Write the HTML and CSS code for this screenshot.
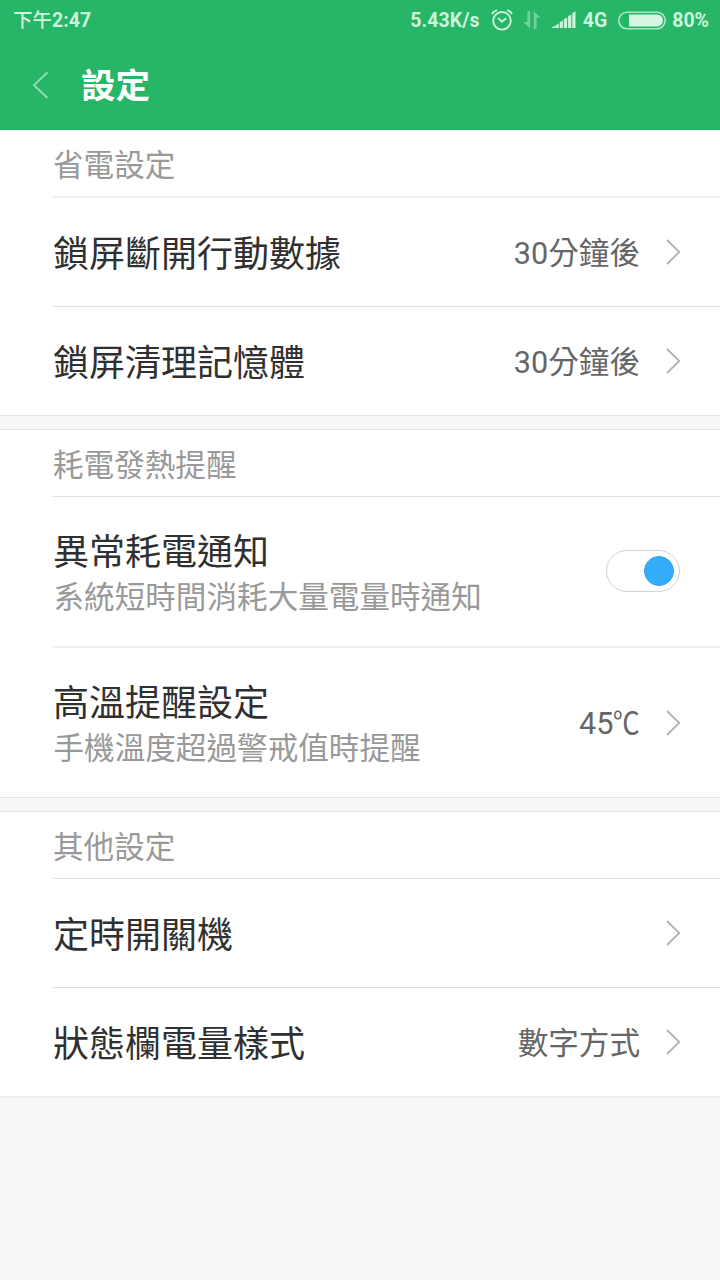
FILE: index.html
```html
<!DOCTYPE html>
<html lang="zh-Hant">
<head>
<meta charset="utf-8">
<title>設定</title>
<link rel="stylesheet" href="styles.css">
</head>
<body>
<header class="top">
  <div class="status">
    <span class="time">下午<b>2:47</b></span>
    <span class="speed">5.43K/s</span>
    <svg class="alarm" width="22" height="22" viewBox="0 0 22 22"><circle cx="11" cy="11.800" r="8.800"/><path d="M7.200 9.200l3.600 3.600 4.400-3.600M1 5Q2.400 2.200 6 1.200M21 5Q19.600 2.200 16 1.200"/></svg>
    <svg class="transfer" width="18" height="18" viewBox="0 0 18 18"><path d="M4.300 0h2.800v17.500L.2 11h4.100zM10.800 18h2.800V6.800h4.200L10.800.2z"/></svg>
    <svg class="signal" width="25" height="18" viewBox="0 0 25 18"><path d="M0 17L4 14.500V17zM4.500 14.200l3.200-1.500V17H4.500zM8.700 11.200l3.200-1.800V17H8.700zM12.900 8.200l3.200-1.800V17h-3.200zM17.100 5.200l3.200-1.800V17h-3.200zM21.300 2.200L24.500.3V17h-3.200z"/></svg>
    <span class="net">4G</span>
    <svg class="battery" width="48" height="19" viewBox="0 0 48 19"><rect class="shell" x=".8" y="1.200" width="46.400" height="16.600" rx="8.300"/><path d="M11 3.500h28a6 6 0 0 1 0 12H11z"/></svg>
    <span class="percent">80%</span>
  </div>
  <div class="bar">
    <svg class="back" width="17" height="29" viewBox="0 0 17 29"><path d="M15.500 1.200L2 14.200l13.500 12.800"/></svg>
    <h1>設定</h1>
  </div>
</header>
<main>
  <section class="group first">
    <h2>省電設定</h2>
    <div class="row">
      <div class="title">鎖屏斷開行動數據</div>
      <div class="value">30分鐘後</div>
      <svg class="chevron" width="15" height="26" viewBox="0 0 15 26"><path d="M1 1l12.300 12L1 25"/></svg>
    </div>
    <div class="row last">
      <div class="title">鎖屏清理記憶體</div>
      <div class="value">30分鐘後</div>
      <svg class="chevron" width="15" height="26" viewBox="0 0 15 26"><path d="M1 1l12.300 12L1 25"/></svg>
    </div>
  </section>
  <div class="gap"></div>
  <section class="group">
    <h2>耗電發熱提醒</h2>
    <div class="row tall">
      <div class="text"><div class="title">異常耗電通知</div><div class="note">系統短時間消耗大量電量時通知</div></div>
      <div class="switch"><span class="knob"></span></div>
    </div>
    <div class="row tall last">
      <div class="text"><div class="title">高溫提醒設定</div><div class="note">手機溫度超過警戒值時提醒</div></div>
      <div class="value">45<span class="unit">℃</span></div>
      <svg class="chevron" width="15" height="26" viewBox="0 0 15 26"><path d="M1 1l12.300 12L1 25"/></svg>
    </div>
  </section>
  <div class="gap"></div>
  <section class="group">
    <h2>其他設定</h2>
    <div class="row short">
      <div class="title">定時開關機</div>
      <svg class="chevron" width="15" height="26" viewBox="0 0 15 26"><path d="M1 1l12.300 12L1 25"/></svg>
    </div>
    <div class="row last">
      <div class="title">狀態欄電量樣式</div>
      <div class="value">數字方式</div>
      <svg class="chevron" width="15" height="26" viewBox="0 0 15 26"><path d="M1 1l12.300 12L1 25"/></svg>
    </div>
  </section>
  <div class="end"></div>
</main>
</body>
</html>
```
FILE: styles.css
```css
* { box-sizing: border-box; }
body {
  margin: 0;
  height: 1280px;
  overflow: hidden;
  background: #f7f7f7;
  font-family: Roboto, "Noto Sans CJK TC", sans-serif;
}
svg { display: block; flex: none; fill: none; }
.top { height: 130px; background: #27b667; }
.status {
  display: flex;
  align-items: center;
  height: 40px;
  padding: 0 12px 0 13px;
  color: #cdf5dc;
  font-size: 19.500px;
  font-weight: 500;
  line-height: 40px;
  white-space: nowrap;
}
.status span { padding-top: 1px; }
.time b { font-weight: 700; }
.speed { margin-left: auto; font-weight: 700; letter-spacing: 0.100px; }
.alarm { margin-left: 11px; stroke: #cdf5dc; stroke-width: 1.900; }
.transfer { margin-left: 10px; fill: #6fd09a; }
.signal { margin-left: 10px; fill: #cdf5dc; }
.net { margin-left: 7px; font-weight: 700; }
.battery { margin-left: 11px; fill: #d6f5e2; }
.shell { fill: none; stroke: #a9e8c3; stroke-width: 1.600; }
.percent { margin: 0 -1px 0 6px; font-weight: 700; }
.bar { display: flex; align-items: center; height: 90px; padding-left: 32px; }
.back { stroke: #8fdcb0; stroke-width: 2; }
.bar h1 {
  margin: 0 0 0 32px;
  padding-top: 1px;
  color: #fff;
  font-size: 34.500px;
  font-weight: 700;
  line-height: 90px;
}
.group { padding-left: 53px; background: #fff; }
.group h2 {
  height: 67px;
  margin: 0;
  border-bottom: 1px solid #e2e2e2;
  color: #999;
  font-size: 30.600px;
  font-weight: 400;
  line-height: 71px;
}
.first h2 { height: 68px; border-bottom: 2px solid #f0f0f0; line-height: 72px; }
.row {
  display: flex;
  align-items: center;
  height: 110px;
  padding-right: 39px;
  border-bottom: 1px solid #e2e2e2;
}
.short, .first .row { height: 109px; }
.tall { height: 151px; border-bottom: 2px solid #f0f0f0; }
.row.last { height: 108px; border-bottom: 0; }
.row.tall.last { height: 149px; }
.title {
  padding-top: 6px;
  color: #303030;
  font-size: 36px;
  line-height: 46px;
  white-space: nowrap;
}
.text { padding-top: 2px; }
.text .title { padding-top: 4px; }
.note { padding-left: 0.500px; color: #999; font-size: 30.600px; line-height: 44px; white-space: nowrap; }
.value { margin-left: auto; padding-top: 3px; color: #666; font-size: 30.600px; line-height: 44px; }
.unit {
  display: inline-block;
  margin-left: -4px;
  font-family: "Noto Sans CJK TC", sans-serif;
  line-height: 1;
  transform: scaleX(0.880);
  transform-origin: right;
}
.chevron { margin-left: auto; stroke: #b2b2b2; stroke-width: 1.800; }
.value + .chevron { margin-left: 26px; }
.switch {
  display: flex;
  align-items: center;
  justify-content: flex-end;
  width: 74px;
  height: 42px;
  margin: -1px 1px 0 auto;
  padding-right: 5px;
  border: 1px solid #d2d2d2;
  border-radius: 21px;
}
.knob { width: 30px; height: 30px; border-radius: 50%; background: #33aefc; border: 1px solid #2e9ee6; }
.gap {
  height: 15px;
  border-top: 1px solid #e4e4e4;
  border-bottom: 1px solid #e4e4e4;
  background: #f7f7f7;
}
.end { border-top: 2px solid #eee; }
```
